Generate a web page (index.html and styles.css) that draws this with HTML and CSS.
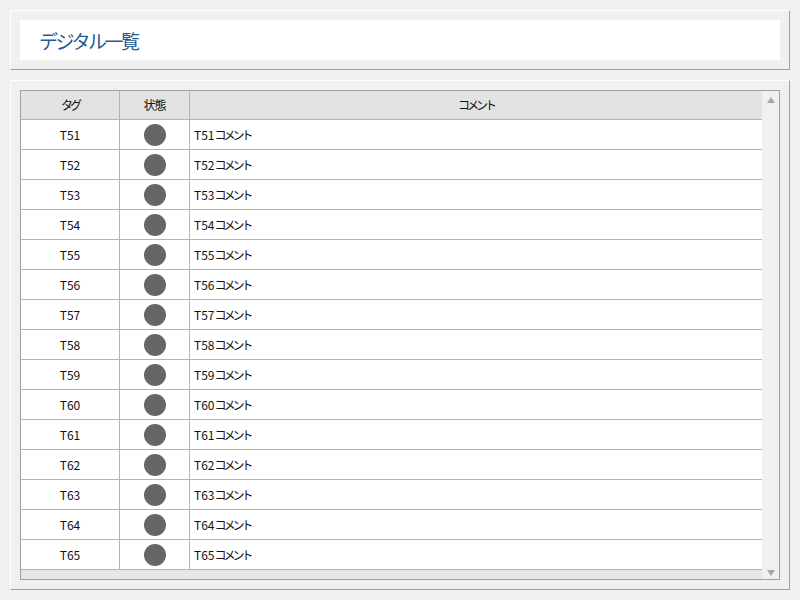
FILE: index.html
```html
<!DOCTYPE html>
<html lang="ja">
<head>
<meta charset="utf-8">
<title>デジタル一覧</title>
<link rel="stylesheet" href="styles.css">
</head>
<body>
<div class="panel panel-title">
  <div class="title-box"><span class="title">デジタル一覧</span></div>
</div>
<div class="panel panel-list">
  <div class="grid-box">
    <div class="grid">
      <div class="row hdr">
        <div class="cell c-tag"><span class="kana">タグ</span></div>
        <div class="cell c-state"><span class="kanji">状態</span></div>
        <div class="cell c-comment"><span class="kana">コメント</span></div>
      </div>
      <div class="row"><div class="cell c-tag">T51</div><div class="cell c-state"><span class="dot"></span></div><div class="cell c-comment">T51<span class="kana">コメント</span></div></div>
      <div class="row"><div class="cell c-tag">T52</div><div class="cell c-state"><span class="dot"></span></div><div class="cell c-comment">T52<span class="kana">コメント</span></div></div>
      <div class="row"><div class="cell c-tag">T53</div><div class="cell c-state"><span class="dot"></span></div><div class="cell c-comment">T53<span class="kana">コメント</span></div></div>
      <div class="row"><div class="cell c-tag">T54</div><div class="cell c-state"><span class="dot"></span></div><div class="cell c-comment">T54<span class="kana">コメント</span></div></div>
      <div class="row"><div class="cell c-tag">T55</div><div class="cell c-state"><span class="dot"></span></div><div class="cell c-comment">T55<span class="kana">コメント</span></div></div>
      <div class="row"><div class="cell c-tag">T56</div><div class="cell c-state"><span class="dot"></span></div><div class="cell c-comment">T56<span class="kana">コメント</span></div></div>
      <div class="row"><div class="cell c-tag">T57</div><div class="cell c-state"><span class="dot"></span></div><div class="cell c-comment">T57<span class="kana">コメント</span></div></div>
      <div class="row"><div class="cell c-tag">T58</div><div class="cell c-state"><span class="dot"></span></div><div class="cell c-comment">T58<span class="kana">コメント</span></div></div>
      <div class="row"><div class="cell c-tag">T59</div><div class="cell c-state"><span class="dot"></span></div><div class="cell c-comment">T59<span class="kana">コメント</span></div></div>
      <div class="row"><div class="cell c-tag">T60</div><div class="cell c-state"><span class="dot"></span></div><div class="cell c-comment">T60<span class="kana">コメント</span></div></div>
      <div class="row"><div class="cell c-tag">T61</div><div class="cell c-state"><span class="dot"></span></div><div class="cell c-comment">T61<span class="kana">コメント</span></div></div>
      <div class="row"><div class="cell c-tag">T62</div><div class="cell c-state"><span class="dot"></span></div><div class="cell c-comment">T62<span class="kana">コメント</span></div></div>
      <div class="row"><div class="cell c-tag">T63</div><div class="cell c-state"><span class="dot"></span></div><div class="cell c-comment">T63<span class="kana">コメント</span></div></div>
      <div class="row"><div class="cell c-tag">T64</div><div class="cell c-state"><span class="dot"></span></div><div class="cell c-comment">T64<span class="kana">コメント</span></div></div>
      <div class="row"><div class="cell c-tag">T65</div><div class="cell c-state"><span class="dot"></span></div><div class="cell c-comment">T65<span class="kana">コメント</span></div></div>
      <div class="hband"></div>
    </div>
    <div class="vscroll">
      <span class="arrow up"></span>
      <span class="arrow down"></span>
    </div>
  </div>
</div>
</body>
</html>
```
FILE: styles.css
```css
html, body {
  margin: 0;
  padding: 0;
  background: #f0f0f0;
}
body {
  width: 800px;
  height: 600px;
  padding-top: 10px;
  box-sizing: border-box;
  font-family: "Noto Sans CJK JP", "Noto Sans", sans-serif;
  font-size: 12px;
  color: #111;
}
.panel {
  margin: 0 10px;
  width: 780px;
  box-sizing: border-box;
  border-top: 1px solid #ffffff;
  border-left: 1px solid #ffffff;
  border-right: 1px solid #a0a0a0;
  border-bottom: 1px solid #a0a0a0;
  padding: 9px;
  background: #f0f0f0;
}
.panel-title {
  height: 60px;
}
.panel-list {
  margin-top: 10px;
  height: 510px;
}
.title-box {
  background: #ffffff;
  height: 40px;
  display: flex;
  align-items: center;
  padding-left: 19px;
}
.title {
  font-size: 19px;
  color: #1f5a96;
  line-height: 24px;
  margin-top: 1px;
  letter-spacing: -2.5px;
}
.grid-box {
  height: 490px;
  box-sizing: border-box;
  border: 1px solid #a0a0a0;
  display: flex;
}
.grid {
  flex: 1;
  display: flex;
  flex-direction: column;
}
.row {
  display: flex;
  height: 30px;
  box-sizing: border-box;
  border-bottom: 1px solid #b4b4b4;
  background: #ffffff;
}
.row.hdr {
  height: 29px;
  background: #e3e3e3;
}
.cell {
  display: flex;
  align-items: center;
  line-height: 16px;
  box-sizing: border-box;
}
.kana {
  letter-spacing: -3px;
}
.kanji {
  letter-spacing: -1px;
}
.c-tag {
  width: 99px;
  justify-content: center;
  border-right: 1px solid #b4b4b4;
}
.c-state {
  width: 70px;
  justify-content: center;
  border-right: 1px solid #b4b4b4;
}
.c-comment {
  flex: 1;
  padding-left: 4px;
}
.hdr .c-comment {
  justify-content: center;
  padding-left: 0;
}
.dot {
  width: 22px;
  height: 22px;
  border-radius: 50%;
  background: #666666;
}
.hband {
  flex: 1;
  background: #e6e6e6;
}
.vscroll {
  width: 17px;
  background: #f0f0f0;
  display: flex;
  flex-direction: column;
  justify-content: space-between;
  align-items: center;
  padding: 6px 0 3px;
  box-sizing: border-box;
}
.arrow {
  width: 0;
  height: 0;
  border-left: 4px solid transparent;
  border-right: 4px solid transparent;
}
.arrow.up {
  border-bottom: 6px solid #a8a8a8;
}
.arrow.down {
  border-top: 6px solid #a8a8a8;
}
```
